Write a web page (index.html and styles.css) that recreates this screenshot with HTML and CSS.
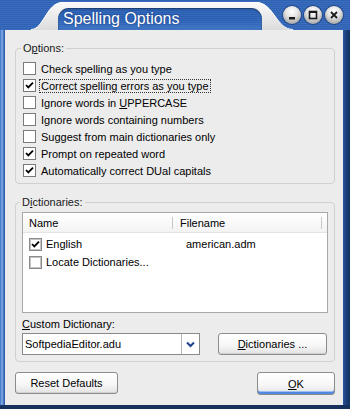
FILE: index.html
```html
<!DOCTYPE html>
<html lang="en">
<head>
  <meta charset="utf-8"/>
  <title>Spelling Options</title>
  <link rel="stylesheet" href="styles.css">
</head>
<body>
  <div class="window">
    <div class="titlebar">
      <div class="tab">
        <svg class="tab-shape" width="264" height="30" viewBox="0 0 264 30">
          <defs>
            <linearGradient id="tabfill" x1="0" y1="0" x2="0" y2="1">
              <stop offset="0" stop-color="#fafafa"/>
              <stop offset="1" stop-color="#dcdcdc"/>
            </linearGradient>
          </defs>
          <path d="M0 30 C14 30 16 2 33 2 L226 2 C244 2 246 30 264 30 Z" fill="url(#tabfill)"/>
          <path d="M1 29.5 C14 29.5 16 2.5 33 2.5 L226 2.5 C244 2.5 246 29.5 263 29.5" fill="none" stroke="#ffffff" stroke-width="1"/>
        </svg>
        <div class="caption">Spelling Options</div>
      </div>
      <div class="controls">
        <span class="ctl">
          <svg width="18" height="18" viewBox="0 0 18 18"><rect x="6" y="11" width="6" height="2.5" fill="#1a1a1a"/></svg>
        </span>
        <span class="ctl">
          <svg width="18" height="18" viewBox="0 0 18 18"><rect x="5.5" y="5.5" width="7" height="7" fill="none" stroke="#1a1a1a" stroke-width="1.6"/><rect x="5.5" y="5" width="7" height="2" fill="#1a1a1a"/></svg>
        </span>
        <span class="ctl">
          <svg width="18" height="18" viewBox="0 0 18 18"><path d="M6 6 L12 12 M12 6 L6 12" stroke="#1a1a1a" stroke-width="1.8"/></svg>
        </span>
      </div>
    </div>

    <div class="client">
      <fieldset class="group options">
        <legend>O<u>p</u>tions:</legend>
        <div class="check"><span class="box"></span><span>Check spelling as you type</span></div>
        <div class="check"><span class="box on"><svg width="11" height="11" viewBox="0 0 11 11"><path d="M2 5 L4.3 7.4 L9 2.6" fill="none" stroke="#000" stroke-width="1.8"/></svg></span><span class="focus">Correct spelling errors as you type</span></div>
        <div class="check"><span class="box"></span><span>Ignore words in <u>U</u>PPERCASE</span></div>
        <div class="check"><span class="box"></span><span>Ignore words containing numbers</span></div>
        <div class="check"><span class="box"></span><span>Suggest from main dictionaries only</span></div>
        <div class="check"><span class="box on"><svg width="11" height="11" viewBox="0 0 11 11"><path d="M2 5 L4.3 7.4 L9 2.6" fill="none" stroke="#000" stroke-width="1.8"/></svg></span><span>Prompt on repeated word</span></div>
        <div class="check"><span class="box on"><svg width="11" height="11" viewBox="0 0 11 11"><path d="M2 5 L4.3 7.4 L9 2.6" fill="none" stroke="#000" stroke-width="1.8"/></svg></span><span>Automatically correct DUal capitals</span></div>
      </fieldset>

      <fieldset class="group dicts">
        <legend>D<u>i</u>ctionaries:</legend>
        <div class="list">
          <div class="list-head">
            <span class="col-name">Name</span>
            <span class="col-file">Filename</span>
            <span class="col-rest"></span>
          </div>
          <div class="list-row">
            <span class="col-name"><span class="box item on"><svg width="11" height="11" viewBox="0 0 11 11"><path d="M2 5 L4.3 7.4 L9 2.6" fill="none" stroke="#000" stroke-width="1.8"/></svg></span>English</span>
            <span class="col-file">american.adm</span>
          </div>
          <div class="list-row">
            <span class="col-name"><span class="box item"></span>Locate Dictionaries...</span>
          </div>
        </div>

        <div class="field-label"><u>C</u>ustom Dictionary:</div>
        <div class="combo-row">
          <div class="combo">
            <span class="combo-text">SoftpediaEditor.adu</span>
            <span class="combo-btn">
              <svg width="9" height="7" viewBox="0 0 9 7"><path d="M1 1.5 L4.5 5 L8 1.5" fill="none" stroke="#1f3f8f" stroke-width="2"/></svg>
            </span>
          </div>
          <button type="button" class="btn dict-btn"><u>D</u>ictionaries ...</button>
        </div>
      </fieldset>

      <div class="footer">
        <button type="button" class="btn reset">Reset Defaults</button>
        <button type="button" class="btn ok"><u>O</u>K</button>
      </div>
    </div>
  </div>
</body>
</html>
```

FILE: styles.css
```css
body {
  margin: 0;
  font-family: 'Liberation Sans', Arial, sans-serif;
  font-size: 11px;
  color: #000;
}

.window {
  width: 350px;
  height: 409px;
  display: flex;
  flex-direction: column;
  background: linear-gradient(to right, #3a6cc0 0, #86b0ea 2px, #3866b6 4px, #2a57a3 5px, #2a57a3 343px, #1f4586 345px, #12305f 350px);
  box-shadow: inset 0 -4px 0 #16315e;
  overflow: hidden;
}

/* title bar */
.titlebar {
  height: 30px;
  display: flex;
  align-items: flex-end;
  padding-left: 30px;
  background:
    repeating-linear-gradient(#2f62b2 0 1px, #3a6dbd 1px 2px);
  flex-shrink: 0;
}

.tab {
  display: grid;
  width: 264px;
  height: 30px;
  margin-right: -11px;
}

.tab-shape,
.caption {
  grid-area: 1 / 1;
}

.caption {
  margin: 8px 0 0 28px;
  width: 204px;
  height: 22px;
  box-sizing: border-box;
  padding-left: 5px;
  border-radius: 11px 11px 0 0;
  background: repeating-linear-gradient(#2a5eb0 0 1px, #3469bb 1px 2px);
  box-shadow: inset 0 1px 2px rgba(0,0,0,0.45), inset 0 -6px 6px rgba(120,170,240,0.25);
  color: #fff;
  font-size: 16px;
  line-height: 22px;
  text-shadow: 0 0 2px rgba(0,20,80,0.6);
}

.controls {
  display: flex;
  gap: 3px;
  margin-left: auto;
  padding-right: 7px;
  align-self: center;
  position: relative;
}

.ctl {
  width: 18px;
  height: 18px;
  border-radius: 50%;
  background: radial-gradient(circle at 50% 30%, #ffffff 0, #e2e2e2 40%, #a8a8a8 80%, #7c7c7c 100%);
  box-shadow: 0 0 0 1px rgba(20,40,80,0.5);
  display: block;
}

.ctl svg {
  display: block;
}

/* client area */
.client {
  flex: 1;
  margin: 0 7px 4px 5px;
  padding: 12px 8px 0 10px;
  background: #ececec;
  display: flex;
  flex-direction: column;
}

.group {
  margin: 0;
  border: 1px solid #d0d0d0;
  border-radius: 4px;
  min-width: 0;
}

.group legend {
  padding: 0 2px;
  margin-left: -2px;
  line-height: 13px;
  color: #1a1a1a;
}

.options {
  padding: 5px 7px 4px 7px;
}

.check {
  height: 17px;
  display: flex;
  align-items: center;
  gap: 5px;
}

.box {
  width: 11px;
  height: 11px;
  border: 1px solid #7a7a7a;
  background: #fff;
  display: inline-block;
  flex-shrink: 0;
}

.box svg {
  display: block;
}

.focus {
  outline: 1px dotted #333;
  padding: 0 1px;
  margin-left: -1px;
}

.dicts {
  margin-top: 12px;
  padding: 3px 6px 6px 6px;
}

.list {
  height: 101px;
  box-sizing: border-box;
  border: 1px solid #a8a8a8;
  background: #fff;
}

.list-head {
  height: 19px;
  display: flex;
  align-items: center;
  background: linear-gradient(#ffffff, #f3f3f3);
  border-bottom: 1px solid #e4e4e4;
}

.list-head .col-name {
  width: 143px;
  padding-left: 6px;
  border-right: 1px solid #c8c8c8;
  line-height: 12px;
}

.list-head .col-file {
  width: 141px;
  padding-left: 7px;
  border-right: 1px solid #c8c8c8;
  line-height: 12px;
}

.list-row {
  height: 18px;
  display: flex;
  align-items: center;
}

.list-row:nth-child(2) {
  margin-top: 2px;
}

.list-row .col-name {
  width: 153px;
  padding-left: 6px;
  display: flex;
  align-items: center;
  gap: 4px;
}

.list-row .col-file {
  padding-left: 4px;
}

.box.item {
  border: 1px solid #8a8a8a;
  box-shadow: inset 0 0 0 1px #c4c4c4;
}

.field-label {
  margin-top: 5px;
  line-height: 13px;
}

.combo-row {
  display: flex;
  align-items: center;
  margin-top: 2px;
}

.combo {
  width: 178px;
  height: 22px;
  box-sizing: border-box;
  border: 1px solid #8a8a8a;
  background: #fff;
  display: flex;
  align-items: center;
}

.combo-text {
  flex: 1;
  padding-left: 2px;
}

.combo-btn {
  width: 17px;
  height: 20px;
  border-left: 1px solid #b8b8b8;
  display: flex;
  align-items: center;
  justify-content: center;
}

.btn {
  font-family: inherit;
  font-size: 11px;
  color: #000;
  height: 22px;
  border: 1px solid #8c8c8c;
  border-radius: 3px;
  background: linear-gradient(#ffffff 0, #f6f6f6 60%, #e2e2e2 100%);
  box-shadow: inset 0 -1px 0 #d0d0d0;
  padding: 0;
}

.dict-btn {
  width: 109px;
  margin-left: auto;
  margin-right: 1px;
}

.footer {
  display: flex;
  justify-content: space-between;
  margin-top: 10px;
}

.reset {
  width: 103px;
}

.ok {
  width: 78px;
  height: 23px;
  box-shadow: inset 0 -2px 0 #4f86e0, inset 0 -3px 0 #9cc0f4;
}
```
